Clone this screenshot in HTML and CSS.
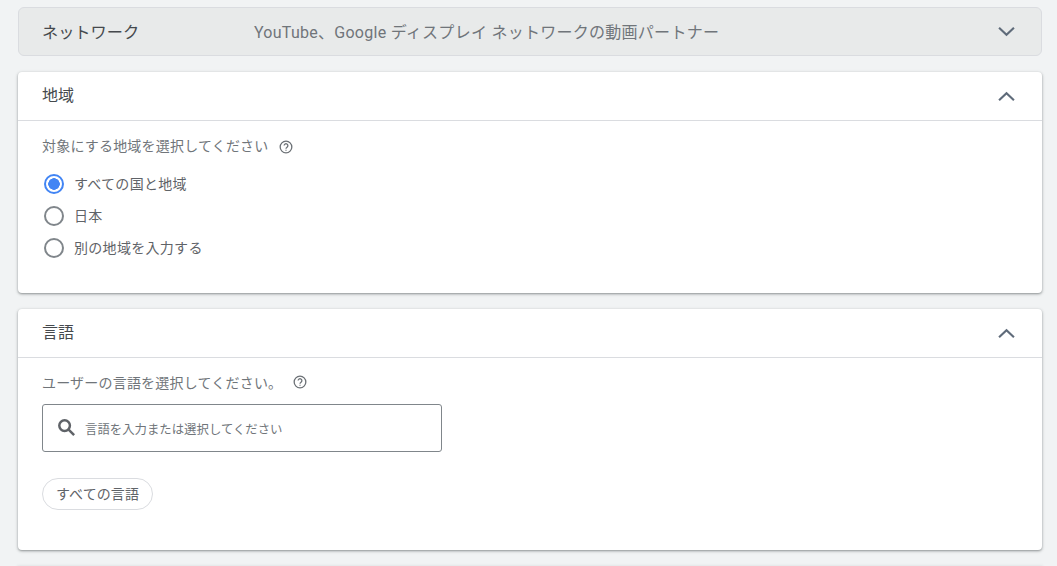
FILE: index.html
```html
<!DOCTYPE html>
<html lang="ja">
<head>
    <meta charset="UTF-8">
    <title>キャンペーン設定</title>
    <link rel="stylesheet" href="styles.css">
</head>
<body>
    <div class="panel panel-collapsed">
        <div class="panel-head">
            <div class="panel-title">ネットワーク</div>
            <div class="panel-summary">YouTube、Google ディスプレイ ネットワークの動画パートナー</div>
            <svg class="chevron" viewBox="0 0 16 10"><path d="M1 1.5 L8 8 L15 1.5"/></svg>
        </div>
    </div>

    <div class="panel panel-region">
        <div class="panel-head">
            <div class="panel-title">地域</div>
            <svg class="chevron" viewBox="0 0 16 10"><path d="M1 8.5 L8 2 L15 8.5"/></svg>
        </div>
        <div class="panel-body">
            <div class="field-label">
                対象にする地域を選択してください
                <svg class="help" viewBox="0 0 24 24"><circle cx="12" cy="12" r="10"/><path d="M8.8 9.6 a3.2 3.2 0 1 1 5 2.7 c-1.2 .8 -1.8 1.4 -1.8 2.9"/><path class="help-dot" d="M11 16.6 h2 v2 h-2 z"/></svg>
            </div>
            <div class="radio-list">
                <div class="radio-row"><span class="radio radio-on"></span><span class="radio-text">すべての国と地域</span></div>
                <div class="radio-row"><span class="radio"></span><span class="radio-text">日本</span></div>
                <div class="radio-row"><span class="radio"></span><span class="radio-text">別の地域を入力する</span></div>
            </div>
        </div>
    </div>

    <div class="panel panel-language">
        <div class="panel-head">
            <div class="panel-title">言語</div>
            <svg class="chevron" viewBox="0 0 16 10"><path d="M1 8.5 L8 2 L15 8.5"/></svg>
        </div>
        <div class="panel-body">
            <div class="field-label label-wide">
                ユーザーの言語を選択してください。
                <svg class="help help-raised" viewBox="0 0 24 24"><circle cx="12" cy="12" r="10"/><path d="M8.8 9.6 a3.2 3.2 0 1 1 5 2.7 c-1.2 .8 -1.8 1.4 -1.8 2.9"/><path class="help-dot" d="M11 16.6 h2 v2 h-2 z"/></svg>
            </div>
            <div class="search-box">
                <svg class="search-icon" viewBox="0 0 20 20"><circle cx="8" cy="8" r="5.6"/><path d="M12 12 L18 18"/></svg>
                <span class="search-hint">言語を入力または選択してください</span>
            </div>
            <div class="chip">すべての言語</div>
        </div>
    </div>

    <div class="panel panel-next"></div>
</body>
</html>
```

FILE: styles.css
```css
html, body {
    margin: 0;
    padding: 0;
    height: 566px;
    overflow: hidden;
}
body {
    background-color: #f1f3f4;
    padding: 7px 15px 0 18px;
    box-sizing: border-box;
    font-family: Roboto, "Noto Sans CJK JP", sans-serif;
    color: #5f6368;
}
.panel {
    background-color: #fff;
    border-radius: 4px;
    margin-bottom: 16px;
    box-shadow: 0 1px 2px rgba(60, 64, 67, 0.4), 0 1px 3px 1px rgba(60, 64, 67, 0.15);
}
.panel-collapsed {
    background-color: #e8eaea;
    height: 49px;
    box-sizing: border-box;
    border: 1px solid #dadce0;
    box-shadow: none;
    border-radius: 6px;
}
.panel-collapsed .panel-head {
    height: 47px;
    border-bottom: 0;
    padding-left: 23px;
    padding-right: 26px;
}
.panel-collapsed .panel-title {
    width: 212px;
    font-size: 16.2px;
    margin-bottom: 2px;
}
.panel-head {
    height: 48px;
    border-bottom: 1px solid #dadce0;
    display: flex;
    align-items: center;
    padding: 0 27px 0 24px;
}
.panel-title {
    font-size: 16px;
    color: #45494d;
    margin-bottom: 5px;
}
.panel-summary {
    font-size: 16px;
    letter-spacing: 0.27px;
    color: #70757a;
    margin-bottom: 2px;
}
.chevron {
    width: 17px;
    height: 11px;
    margin-left: auto;
    fill: none;
    stroke: #5f6b7a;
    stroke-width: 2;
}
.panel-region {
    height: 221px;
}
.panel-language {
    height: 241px;
}
.panel-body {
    padding: 15px 24px 0;
}
.field-label {
    display: flex;
    align-items: center;
    gap: 10px;
    font-size: 14px;
    letter-spacing: 0.2px;
    line-height: 20px;
    color: #70757a;
}
.label-wide {
    gap: 11px;
}
.help {
    width: 14px;
    height: 14px;
    margin-top: 1px;
    fill: none;
    stroke: #6b7075;
    stroke-width: 2.2;
}
.help-raised {
    margin-top: -2px;
}
.help-dot {
    fill: #6b7075;
    stroke: none;
}
.radio-list {
    margin-top: 12px;
}
.radio-row {
    display: flex;
    align-items: center;
    gap: 10px;
    height: 32px;
    margin-left: 2px;
    font-size: 14px;
    color: #5f6368;
}
.radio-text {
    letter-spacing: 0.3px;
    margin-bottom: 2px;
}
.radio {
    width: 20px;
    height: 20px;
    box-sizing: border-box;
    border: 2px solid #80868b;
    border-radius: 50%;
}
.radio-on {
    border-color: #4285f4;
    background: radial-gradient(circle, #4285f4 0 5.5px, #fff 6px);
}
.search-box {
    margin-top: 11px;
    width: 400px;
    height: 48px;
    box-sizing: border-box;
    border: 1px solid #80868b;
    border-radius: 3px;
    display: flex;
    align-items: center;
    padding-left: 15px;
    gap: 9px;
}
.search-icon {
    width: 19px;
    height: 19px;
    margin-top: -2px;
    margin-left: -1px;
    fill: none;
    stroke: #5f6368;
    stroke-width: 2.6;
}
.search-hint {
    font-size: 12.4px;
    color: #70757a;
    margin-top: 2px;
}
.chip {
    margin-top: 26px;
    width: 111px;
    height: 32px;
    box-sizing: border-box;
    border: 1px solid #dadce0;
    border-radius: 16px;
    display: flex;
    align-items: center;
    justify-content: center;
    padding-bottom: 3px;
    font-size: 14px;
    letter-spacing: 0.1px;
    color: #5f6368;
}
.panel-next {
    height: 0;
    margin-bottom: 0;
}
```
